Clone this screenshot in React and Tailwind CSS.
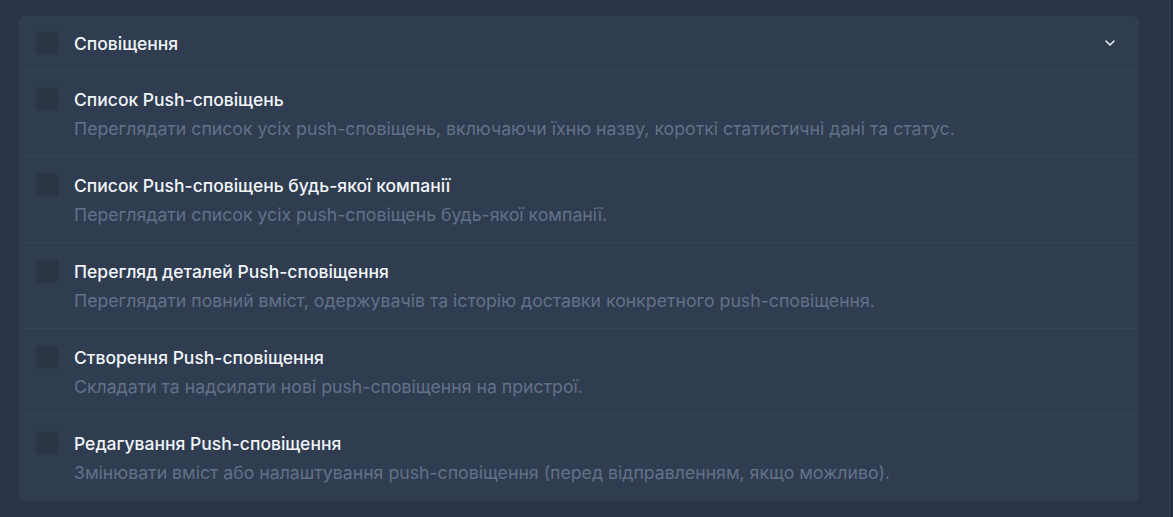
import React from "react";

const rows = [
  {
    t: "Список Push-сповіщень",
    d: "Переглядати список усіх push-сповіщень, включаючи їхню назву, короткі статистичні дані та статус.",
  },
  {
    t: "Список Push-сповіщень будь-якої компанії",
    d: "Переглядати список усіх push-сповіщень будь-якої компанії.",
  },
  {
    t: "Перегляд деталей Push-сповіщення",
    d: "Переглядати повний вміст, одержувачів та історію доставки конкретного push-сповіщення.",
  },
  {
    t: "Створення Push-сповіщення",
    d: "Складати та надсилати нові push-сповіщення на пристрої.",
  },
  {
    t: "Редагування Push-сповіщення",
    d: "Змінювати вміст або налаштування push-сповіщення (перед відправленням, якщо можливо).",
  },
];

function Box() {
  return <div className="w-6 h-6 shrink-0 rounded-[4px] bg-[#2a3546] border border-[#2d394b]" />;
}

export default function App() {
  return (
    <div
      className="w-[1173px] h-[517px] bg-[#2a3446] flex"
      style={{ fontFamily: "Inter, 'Noto Sans', sans-serif" }}
    >
      <div className="flex-1 pl-[19px] pr-[30px] pt-4">
        <div className="rounded-md bg-[#303d50] overflow-hidden">
          <div className="h-[55px] flex items-center pl-4 pr-[21px] border-b border-[#36445a]">
            <Box />
            <div className="ml-[15px] text-[17.5px] leading-6 mt-[1px] font-medium text-[#f1f5f9] flex-1">Сповіщення</div>
            <svg width="16" height="16" viewBox="0 0 24 24" fill="none" stroke="#f1f5f9" strokeWidth="2.2" strokeLinecap="round" strokeLinejoin="round">
              <path d="M6 9l6 6 6-6" />
            </svg>
          </div>
          {rows.map((r, i) => (
            <div
              key={i}
              className={`h-[86px] flex pl-4 pt-[16px] ${i < rows.length - 1 ? "border-b border-[#36445a]" : ""}`}
            >
              <Box />
              <div className="ml-[15px]">
                <div className="text-[17.5px] leading-6 font-medium text-[#f1f5f9] mt-[1px]">{r.t}</div>
                <div className="text-[17.7px] leading-6 mt-[5px] text-[#61718a]">{r.d}</div>
              </div>
            </div>
          ))}
        </div>
      </div>
      <div className="w-[4px] h-full flex">
        <div className="w-px bg-[#35425a]" />
        <div className="flex-1 bg-[#263040]" />
      </div>
    </div>
  );
}
